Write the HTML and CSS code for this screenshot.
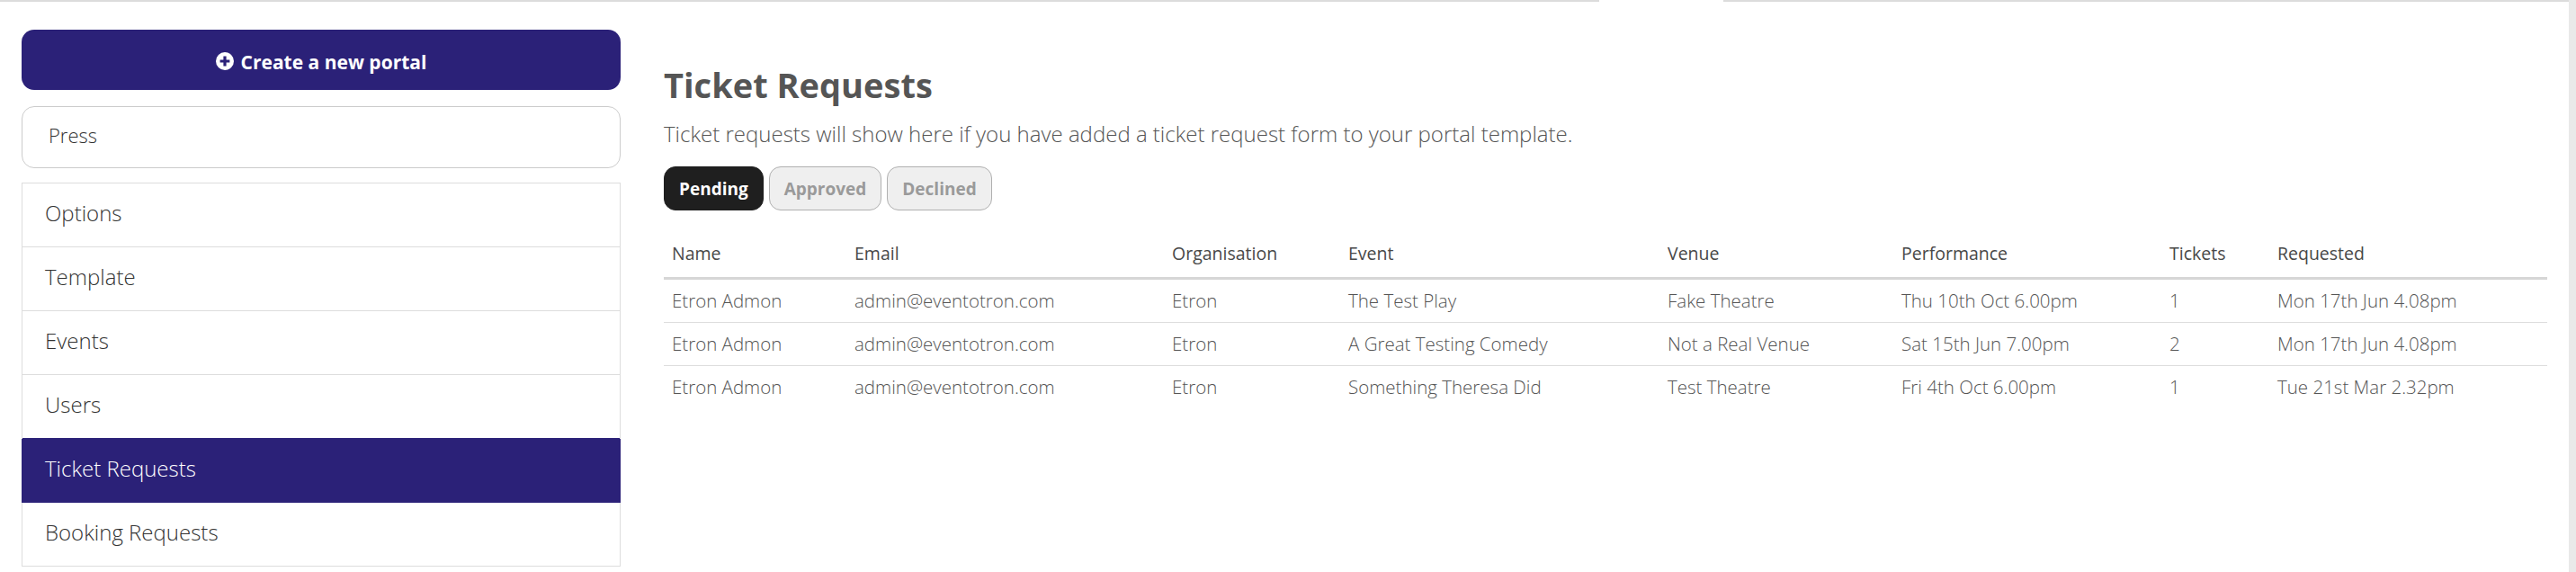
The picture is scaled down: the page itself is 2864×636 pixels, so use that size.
FILE: index.html
```html
<!DOCTYPE html>
<html lang="en">
<head>
<meta charset="utf-8">
<title>Ticket Requests</title>
<link rel="stylesheet" href="styles.css">
</head>
<body>
<div class="app">
  <div class="page">
    <div class="topbar"><span class="seg seg-a"></span><span class="seg seg-b"></span></div>
    <div class="layout">
      <aside class="sidebar">
        <button class="create-btn" type="button">
          <svg class="plus-icon" viewBox="0 0 20 20" width="20" height="20" aria-hidden="true">
            <circle cx="10" cy="10" r="10" fill="#ffffff"/>
            <path d="M8.4 4.6h3.2v3.8h3.8v3.2h-3.8v3.8H8.4v-3.8H4.6V8.4h3.8z" fill="#2b2178"/>
          </svg>
          <span>Create a new portal</span>
        </button>
        <div class="portal-select">Press</div>
        <nav class="nav">
          <a class="nav-item" href="#">Options</a>
          <a class="nav-item" href="#">Template</a>
          <a class="nav-item" href="#">Events</a>
          <a class="nav-item" href="#">Users</a>
          <a class="nav-item active" href="#">Ticket Requests</a>
          <a class="nav-item" href="#">Booking Requests</a>
        </nav>
      </aside>
      <main class="content">
        <h1 class="title">Ticket Requests</h1>
        <p class="intro">Ticket requests will show here if you have added a ticket request form to your portal template.</p>
        <div class="filters">
          <button class="filter active" type="button">Pending</button>
          <button class="filter" type="button">Approved</button>
          <button class="filter" type="button">Declined</button>
        </div>
        <table class="requests">
          <colgroup>
            <col class="c-name"><col class="c-email"><col class="c-org"><col class="c-event">
            <col class="c-venue"><col class="c-perf"><col class="c-tickets"><col class="c-req">
          </colgroup>
          <thead>
            <tr><th>Name</th><th>Email</th><th>Organisation</th><th>Event</th><th>Venue</th><th>Performance</th><th>Tickets</th><th>Requested</th></tr>
          </thead>
          <tbody>
            <tr><td>Etron Admon</td><td>admin@eventotron.com</td><td>Etron</td><td>The Test Play</td><td>Fake Theatre</td><td>Thu 10th Oct 6.00pm</td><td>1</td><td>Mon 17th Jun 4.08pm</td></tr>
            <tr><td>Etron Admon</td><td>admin@eventotron.com</td><td>Etron</td><td>A Great Testing Comedy</td><td>Not a Real Venue</td><td>Sat 15th Jun 7.00pm</td><td>2</td><td>Mon 17th Jun 4.08pm</td></tr>
            <tr><td>Etron Admon</td><td>admin@eventotron.com</td><td>Etron</td><td>Something Theresa Did</td><td>Test Theatre</td><td>Fri 4th Oct 6.00pm</td><td>1</td><td>Tue 21st Mar 2.32pm</td></tr>
          </tbody>
        </table>
      </main>
    </div>
  </div>
  <div class="rail"></div>
</div>
</body>
</html>
```
FILE: styles.css
```css
html, body {
  margin: 0;
  padding: 0;
  height: 100%;
  overflow: hidden;
  background: #ffffff;
}
body {
  font-family: "Open Sans", "Liberation Sans", sans-serif;
  color: #333;
}
.app {
  display: flex;
  height: 636px;
}
.page {
  flex: 1;
  min-width: 0;
}
.rail {
  width: 8px;
  flex: none;
  background: #e9e9e9;
}
.topbar {
  display: flex;
  height: 2px;
}
.seg {
  display: block;
  border-top: 2px solid #dcdcdc;
}
.seg-a {
  width: 1778px;
}
.seg-b {
  flex: 1;
  margin-left: 138px;
}
.layout {
  display: flex;
  gap: 48px;
  padding: 31px 24px 0 24px;
}
.sidebar {
  width: 666px;
  flex: none;
  display: flex;
  flex-direction: column;
}
.create-btn {
  height: 67px;
  border: 0;
  border-radius: 14px;
  background: #2b2178;
  color: #fff;
  font-family: "Open Sans", "Liberation Sans", sans-serif;
  font-weight: 700;
  font-size: 21px;
  line-height: 1;
  display: flex;
  align-items: center;
  justify-content: center;
  gap: 8px;
  padding: 5px 0 0;
}
.plus-icon {
  display: block;
  margin-top: -2px;
}
.portal-select {
  margin-top: 18px;
  height: 69px;
  box-sizing: border-box;
  border: 1px solid #cccccc;
  border-radius: 14px;
  padding-left: 29px;
  display: flex;
  align-items: center;
  font-size: 22px;
  font-weight: 350;
  color: #333;
  padding-bottom: 5px;
}
.nav {
  margin-top: 16px;
  border: 1px solid #dddddd;
  border-bottom: 0;
  display: flex;
  flex-direction: column;
}
.nav-item {
  height: 70px;
  box-sizing: border-box;
  border-bottom: 1px solid #dddddd;
  padding: 0 0 5px 25px;
  display: flex;
  align-items: center;
  font-weight: 300;
  font-size: 24px;
  color: #333;
  text-decoration: none;
}
.nav-item + .nav-item {
  height: 71px;
}
.nav-item:first-child {
  height: 71px;
}
.nav-item.active {
  background: #2b2178;
  color: #fff;
  border-bottom-color: #2b2178;
  box-shadow: 0 -1px 0 #2b2178, -1px 0 0 #2b2178, 1px 0 0 #2b2178;
}
.content {
  flex: 1;
  min-width: 0;
}
.title {
  margin: 41px 0 0;
  font-weight: 700;
  font-size: 38px;
  line-height: 40px;
  color: #555;
}
.intro {
  margin: 20px 0 0;
  font-weight: 300;
  font-size: 24px;
  line-height: 30px;
  color: #555;
}
.filters {
  margin-top: 21px;
  display: flex;
  gap: 6px;
}
.filter {
  height: 49px;
  padding: 0 16px;
  border: 1px solid #b0b0b0;
  border-radius: 13px;
  background: #efefef;
  color: #9a9a9a;
  font-family: "Open Sans", "Liberation Sans", sans-serif;
  font-weight: 700;
  font-size: 19px;
}
.filter.active {
  background: #1f1f1f;
  border-color: #1f1f1f;
  color: #fff;
}
.requests {
  margin-top: 25px;
  width: 100%;
  table-layout: fixed;
  border-collapse: collapse;
}
.c-name { width: 203px; }
.c-email { width: 353px; }
.c-org { width: 196px; }
.c-event { width: 355px; }
.c-venue { width: 260px; }
.c-perf { width: 298px; }
.c-tickets { width: 120px; }
.c-req { width: 309px; }
.requests th {
  text-align: left;
  padding: 9px 9px 12px;
  line-height: 28px;
  font-size: 19.5px;
  font-weight: 400;
  color: #484848;
  border-bottom: 3px solid #d6d6d6;
  white-space: nowrap;
}
.requests td {
  padding: 9px 9px 10px;
  line-height: 28px;
  font-size: 20.5px;
  font-weight: 300;
  color: #555;
  border-bottom: 1px solid #dddddd;
  white-space: nowrap;
}
.requests tbody tr:last-child td {
  border-bottom: 0;
}
```
